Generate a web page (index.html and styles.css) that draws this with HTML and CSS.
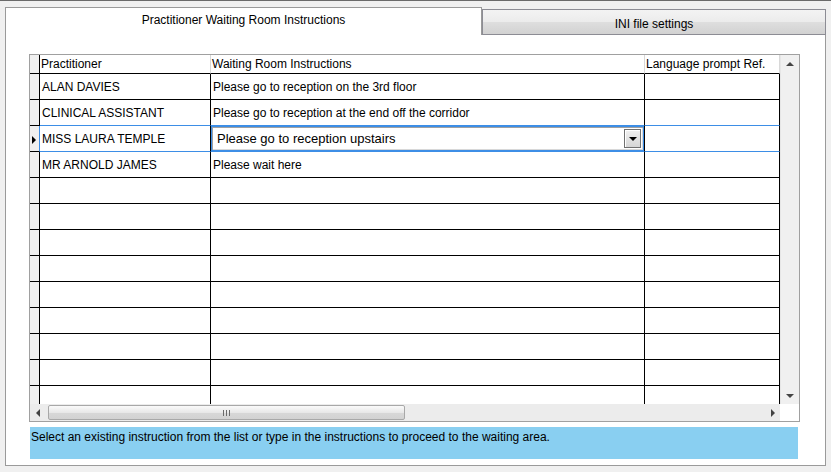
FILE: index.html
```html
<!DOCTYPE html>
<html lang="en">
<head>
  <meta charset="UTF-8">
  <title>Waiting Room Instructions</title>
  <link rel="stylesheet" href="styles.css">
</head>
<body>
  <div class="window">
    <div class="tabs">
      <div class="tab active">Practitioner Waiting Room Instructions</div>
      <div class="tab">INI file settings</div>
    </div>
    <div class="panel">
      <div class="grid-box">
        <div class="grid">
          <div class="row head">
            <div class="cell ind"></div>
            <div class="cell">Practitioner</div>
            <div class="cell">Waiting Room Instructions</div>
            <div class="cell">Language prompt Ref.</div>
          </div>
          <div class="row">
            <div class="cell ind"></div>
            <div class="cell">ALAN DAVIES</div>
            <div class="cell">Please go to reception on the 3rd floor</div>
            <div class="cell"></div>
          </div>
          <div class="row pre">
            <div class="cell ind"></div>
            <div class="cell">CLINICAL ASSISTANT</div>
            <div class="cell">Please go to reception at the end off the corridor</div>
            <div class="cell"></div>
          </div>
          <div class="row sel">
            <div class="cell ind"><span class="pointer"></span></div>
            <div class="cell">MISS LAURA TEMPLE</div>
            <div class="cell edit">
              <div class="combo">
                <span class="combo-text">Please go to reception upstairs</span>
                <span class="combo-btn"><span class="tri-down"></span></span>
              </div>
            </div>
            <div class="cell"></div>
          </div>
          <div class="row">
            <div class="cell ind"></div>
            <div class="cell">MR ARNOLD JAMES</div>
            <div class="cell">Please wait here</div>
            <div class="cell"></div>
          </div>
          <div class="row"><div class="cell ind"></div><div class="cell"></div><div class="cell"></div><div class="cell"></div></div>
          <div class="row"><div class="cell ind"></div><div class="cell"></div><div class="cell"></div><div class="cell"></div></div>
          <div class="row"><div class="cell ind"></div><div class="cell"></div><div class="cell"></div><div class="cell"></div></div>
          <div class="row"><div class="cell ind"></div><div class="cell"></div><div class="cell"></div><div class="cell"></div></div>
          <div class="row"><div class="cell ind"></div><div class="cell"></div><div class="cell"></div><div class="cell"></div></div>
          <div class="row"><div class="cell ind"></div><div class="cell"></div><div class="cell"></div><div class="cell"></div></div>
          <div class="row"><div class="cell ind"></div><div class="cell"></div><div class="cell"></div><div class="cell"></div></div>
          <div class="row"><div class="cell ind"></div><div class="cell"></div><div class="cell"></div><div class="cell"></div></div>
          <div class="row"><div class="cell ind"></div><div class="cell"></div><div class="cell"></div><div class="cell"></div></div>
        </div>
        <div class="vscroll">
          <span class="arrow up"></span>
          <span class="arrow down"></span>
        </div>
        <div class="hscroll">
          <span class="arrow left"></span>
          <div class="thumb"><span class="grip"></span><span class="grip"></span><span class="grip"></span></div>
          <span class="arrow right"></span>
        </div>
        <div class="corner"></div>
      </div>
      <div class="status">Select an existing instruction from the list or type in the instructions to proceed to the waiting area.</div>
    </div>
  </div>
</body>
</html>
```
FILE: styles.css
```css
* {
  margin: 0;
  padding: 0;
  box-sizing: border-box;
}
body {
  background-color: #f0f0f0;
  border-top: 1px solid #6a6a6a;
  font-family: "Liberation Sans", Arial, sans-serif;
  font-size: 12px;
  color: #000;
  height: 472px;
  overflow: hidden;
}
.window {
  padding: 6px 0 0 5px;
  width: 826px;
}

/* tabs */
.tabs {
  display: flex;
  align-items: flex-end;
}
.tab {
  border: 1px solid #8c8c94;
  text-align: center;
}
.tab.active {
  width: 477px;
  height: 28px;
  border-color: #9a9a9a;
  border-bottom: none;
  background-color: #fff;
  padding-top: 5px;
}
.tab:not(.active) {
  width: 344px;
  height: 26px;
  padding-top: 7px;
  background: linear-gradient(#f3f3f3, #ececec 48%, #dedede 52%, #d2d2d2);
}

/* panel */
.panel {
  width: 821px;
  height: 431px;
  border: 1px solid #9a9a9a;
  border-top: none;
  background-color: #fff;
  padding: 19px 25px 6px 23px;
}
.grid-box {
  display: grid;
  grid-template-columns: 750px 19px;
  grid-template-rows: 349px 17px;
  width: 771px;
  border: 1px solid #a0a0a0;
}
.grid {
  overflow: hidden;
}
.row {
  display: grid;
  grid-template-columns: 10px 171px 434px 135px;
  height: 26px;
}
.cell {
  border-right: 1px solid #000;
  border-bottom: 1px solid #000;
  padding: 6px 0 0 2px;
  white-space: nowrap;
  overflow: hidden;
}
.cell.ind {
  background-color: #f0f0f0;
  padding: 0;
  position: relative;
}
.row.head {
  height: 19px;
}
.row.head .cell {
  padding: 2px 0 0 1px;
  border-right-color: #d8d8d8;
}
.row.head .cell.ind {
  border-right-color: #000;
}

/* selected row */
.row.pre .cell:not(.ind),
.row.sel .cell:not(.ind) {
  border-bottom-color: #3d8ee6;
}
.row.sel .cell.ind {
  border-right-color: #3d8ee6;
}
.pointer {
  position: absolute;
  left: 2px;
  top: 10px;
  border-left: 4px solid #000;
  border-top: 4px solid transparent;
  border-bottom: 4px solid transparent;
}
.cell.edit {
  padding: 0;
}
.combo {
  height: 25px;
  border: 1px solid #3d8ee6;
  display: flex;
  align-items: center;
  justify-content: space-between;
  box-shadow: inset 1px 1px 0 #a0a0a0, inset -1px -1px 0 #d8d8d8;
  padding: 0 2px 0 5px;
  font-size: 13px;
}
.combo-btn {
  width: 17px;
  height: 19px;
  border: 1px solid #707070;
  background: linear-gradient(#f0f0f0, #d6d6d6);
  box-shadow: inset 1px 1px 0 #fff;
  display: flex;
  align-items: center;
  justify-content: center;
}
.tri-down {
  border-top: 4px solid #000;
  border-left: 4px solid transparent;
  border-right: 4px solid transparent;
}

/* scrollbars */
.vscroll {
  background-color: #f0f0f0;
  border-left: 1px solid #e6e6e6;
  display: flex;
  flex-direction: column;
  justify-content: space-between;
  align-items: center;
  padding: 7px 0 6px;
}
.hscroll {
  background-color: #ececec;
  display: flex;
  align-items: center;
  padding: 0 5px 0 6px;
}
.corner {
  background-color: #fff;
}
.arrow {
  display: block;
  width: 0;
  height: 0;
}
.arrow.up {
  border-bottom: 4px solid #444;
  border-left: 4px solid transparent;
  border-right: 4px solid transparent;
}
.arrow.down {
  border-top: 4px solid #444;
  border-left: 4px solid transparent;
  border-right: 4px solid transparent;
}
.arrow.left {
  border-right: 4px solid #444;
  border-top: 4px solid transparent;
  border-bottom: 4px solid transparent;
}
.arrow.right {
  border-left: 4px solid #444;
  border-top: 4px solid transparent;
  border-bottom: 4px solid transparent;
  margin-left: auto;
}
.thumb {
  width: 357px;
  height: 15px;
  margin-left: 8px;
  border: 1px solid #a8a8a8;
  border-radius: 2px;
  background: linear-gradient(#fafafa, #e8e8e8 50%, #d8d8d8 52%, #d2d2d2);
  display: flex;
  justify-content: center;
  align-items: center;
  gap: 2px;
}
.grip {
  width: 1px;
  height: 6px;
  background-color: #6a6a6a;
}

/* status */
.status {
  width: 768px;
  height: 32px;
  margin: 5px 0 0 1px;
  padding: 3px 0 0 1px;
  background-color: #89cff1;
}
```
